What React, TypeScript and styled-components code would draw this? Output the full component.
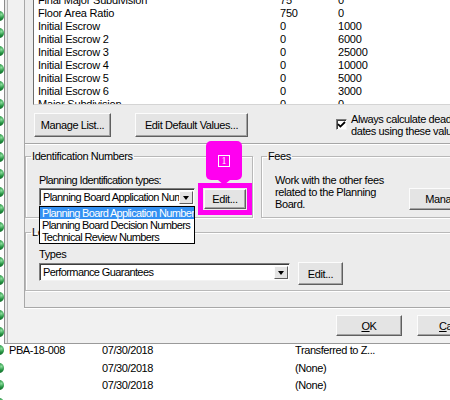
import React from 'react';
import styled, { createGlobalStyle } from 'styled-components';

const GlobalStyle = createGlobalStyle`
    html, body {
        margin: 0;
        padding: 0;
        background: #fff;
    }
    body {
        font-family: "Liberation Sans", Arial, sans-serif;
        font-size: 11px;
        letter-spacing: -0.4px;
        color: #000;
    }
`;

const records = [
    ...Array.from({ length: 19 }, () => ({ id: '', date: '', status: '' })),
    { id: 'PBA-18-008', date: '07/30/2018', status: 'Transferred to Z...' },
    { id: '', date: '07/30/2018', status: '(None)' },
    { id: '', date: '07/30/2018', status: '(None)' },
    { id: '', date: '', status: '' },
];

const reviewFields = [
    ['Final Major Subdivision', '75', '0'],
    ['Floor Area Ratio', '750', '0'],
    ['Initial Escrow', '0', '1000'],
    ['Initial Escrow 2', '0', '6000'],
    ['Initial Escrow 3', '0', '25000'],
    ['Initial Escrow 4', '0', '10000'],
    ['Initial Escrow 5', '0', '5000'],
    ['Initial Escrow 6', '0', '3000'],
    ['Major Subdivision', '0', '0'],
];

const idTypes = [
    'Planning Board Application Numbers',
    'Planning Board Decision Numbers',
    'Technical Review Numbers',
];

const App: React.FC = () => {
    return (
        <Screen>
            <GlobalStyle />
            <RecordList>
                {records.map((r, i) => (
                    <RecordRow key={i}>
                        <StatusDot />
                        <RecordCell $w={93}>{r.id}</RecordCell>
                        <RecordCell $w={193}>{r.date}</RecordCell>
                        <RecordCell $w={150}>{r.status}</RecordCell>
                    </RecordRow>
                ))}
            </RecordList>

            <Dialog>
                <DialogFrame>
                    <Panel>
                        <ListBox>
                            <ListScroll>
                                {reviewFields.map(([name, a, b]) => (
                                    <ListRow key={name}>
                                        <span>{name}</span>
                                        <span>{a}</span>
                                        <span>{b}</span>
                                    </ListRow>
                                ))}
                            </ListScroll>
                        </ListBox>

                        <ButtonsRow>
                            <Button $w={77} $h={24}>Manage List...</Button>
                            <Button $w={113} $h={24}>Edit Default Values...</Button>
                            <CheckOption>
                                <CheckBox>
                                    <svg width="9" height="9" viewBox="0 0 9 9">
                                        <path d="M1 4.2 L3.4 6.6 L8 2" fill="none" stroke="#000" strokeWidth="1.8" />
                                    </svg>
                                </CheckBox>
                                <CheckText>
                                    Always calculate deadline
                                    <br />
                                    dates using these values
                                </CheckText>
                            </CheckOption>
                        </ButtonsRow>

                        <Separator />

                        <GroupsRow>
                            <GroupBox $w={228}>
                                <GroupTitle>Identification Numbers</GroupTitle>
                                <FieldLabel $tight>Planning Identification types:</FieldLabel>
                                <FieldRow>
                                    <Combo $w={156}>
                                        <ComboText>Planning Board Application Numbers</ComboText>
                                        <ComboArrow />
                                        <DropList>
                                            {idTypes.map((t, i) => (
                                                <DropItem key={t} $active={i === 0}>
                                                    {t}
                                                </DropItem>
                                            ))}
                                        </DropList>
                                    </Combo>
                                    <Highlight>
                                        <Callout>
                                            <CalloutBadge>1</CalloutBadge>
                                        </Callout>
                                        <Button $w={42} $h={20}>Edit...</Button>
                                    </Highlight>
                                </FieldRow>
                            </GroupBox>

                            <GroupBox>
                                <GroupTitle>Fees</GroupTitle>
                                <FeesRow>
                                    <FeesText>
                                        Work with the other fees
                                        <br />
                                        related to the Planning
                                        <br />
                                        Board.
                                    </FeesText>
                                    <Button $w={78} $h={22} $top={14}>Manage...</Button>
                                </FeesRow>
                            </GroupBox>
                        </GroupsRow>

                        <LookupBox>
                            <GroupTitle>Lookup Lists</GroupTitle>
                            <FieldLabel $top={9}>Types</FieldLabel>
                            <FieldRow $top={2}>
                                <Combo $w={251}>
                                    <ComboText>Performance Guarantees</ComboText>
                                    <ComboArrow />
                                </Combo>
                                <Button $w={45} $h={23} $top={-1} $left={8}>Edit...</Button>
                            </FieldRow>
                        </LookupBox>
                    </Panel>

                    <ButtonBar>
                        <Button $w={66} $h={21}>
                            <u>O</u>K
                        </Button>
                        <Button $w={76} $h={21}>
                            <u>C</u>ancel
                        </Button>
                    </ButtonBar>
                </DialogFrame>
            </Dialog>
        </Screen>
    );
};

const Screen = styled.div`
    position: relative;
    width: 450px;
    height: 400px;
    overflow: hidden;
    background: #fff;
`;

const RecordList = styled.div`
    padding-top: 7px;
`;

const RecordRow = styled.div`
    display: flex;
    align-items: center;
    height: 17.6px;
    white-space: nowrap;
`;

const StatusDot = styled.span`
    flex: none;
    width: 9px;
    height: 10px;
    margin-left: -5px;
    margin-right: 5px;
    border-radius: 50%;
    background: radial-gradient(circle at 70% 35%, #8fe0a0 0, #23913f 40%, #0b4a20 100%);
`;

const RecordCell = styled.span<{ $w: number }>`
    flex: none;
    width: ${(p) => p.$w}px;
    overflow: hidden;
`;

const Dialog = styled.div`
    position: absolute;
    top: 0;
    left: 4px;
    width: 492px;
    height: 344px;
    box-sizing: border-box;
    display: flex;
    padding-left: 2px;
    background: #e9e9e9;
    border-left: 1px solid #8c8c8c;
    border-bottom: 1px solid #9a9a9a;
`;

const DialogFrame = styled.div`
    flex: 1;
    display: flex;
    flex-direction: column;
    background: #f1f1f1;
    border-left: 1px solid #b4b4b4;
`;

const Panel = styled.div`
    height: 308px;
    margin-left: 16px;
    box-sizing: border-box;
    display: flex;
    flex-direction: column;
    background: #ececec;
    border-left: 1px solid #a8a8a8;
    border-bottom: 1px solid #a8a8a8;
    box-shadow: 0 1px 0 #fff;
`;

const ListBox = styled.div`
    flex: none;
    height: 105px;
    margin-left: 8px;
    box-sizing: border-box;
    overflow: hidden;
    background: #fff;
    border-left: 1px solid #6e6e6e;
    border-bottom: 1px solid #d4d4d4;
`;

const ListScroll = styled.div`
    margin-top: -6px;
`;

const ListRow = styled.div`
    display: grid;
    grid-template-columns: 242px 58px 1fr;
    height: 13px;
    line-height: 13px;
    padding-left: 4px;
    letter-spacing: -0.2px;
    white-space: nowrap;
`;

const ButtonsRow = styled.div`
    display: flex;
    align-items: flex-start;
    gap: 24px;
    margin: 8px 0 0 9px;
`;

const Button = styled.button<{ $w: number; $h: number; $top?: number; $left?: number }>`
    flex: none;
    width: ${(p) => p.$w}px;
    height: ${(p) => p.$h}px;
    margin-top: ${(p) => p.$top ?? 0}px;
    margin-left: ${(p) => p.$left ?? 0}px;
    padding: 0;
    box-sizing: border-box;
    font: inherit;
    letter-spacing: inherit;
    color: #000;
    white-space: nowrap;
    background: #e4e4e4;
    border: 1px solid;
    border-color: #fcfcfc #5f5f5f #5f5f5f #fcfcfc;
    box-shadow: inset -1px -1px 0 #a3a3a3;

    u {
        text-decoration: underline;
    }
`;

const CheckOption = styled.div`
    display: flex;
    align-items: flex-start;
    gap: 4px;
    margin-left: 64px;
    white-space: nowrap;
`;

const CheckBox = styled.span`
    flex: none;
    display: flex;
    align-items: center;
    justify-content: center;
    width: 11px;
    height: 11px;
    margin-top: 6px;
    box-sizing: border-box;
    background: #fff;
    border: 1px solid;
    border-color: #7a7a7a #f4f4f4 #f4f4f4 #7a7a7a;
    box-shadow: inset 1px 1px 0 #404040;
`;

const CheckText = styled.div`
    line-height: 12px;
`;

const Separator = styled.div`
    flex: none;
    height: 1px;
    margin-top: 6px;
    background: #a6a6a6;
    border-bottom: 1px solid #fff;
`;

const GroupsRow = styled.div`
    display: flex;
    gap: 8px;
    margin-top: 5px;
`;

const GroupBox = styled.fieldset<{ $w?: number }>`
    ${(p) => (p.$w ? `width: ${p.$w}px; flex: none;` : 'flex: 1;')}
    height: 68px;
    margin: 0;
    padding: 11px 0 0 13px;
    box-sizing: border-box;
    min-width: 0;
    border: 1px solid #b8b8b8;
    box-shadow: inset 1px 1px 0 #fff, 1px 1px 0 #fff;
`;

const LookupBox = styled(GroupBox)`
    flex: none;
    height: 65px;
    margin-top: 8px;
    padding-top: 0;
`;

const GroupTitle = styled.legend`
    padding: 0 1px;
    margin-left: -8px;
    line-height: 13px;
    white-space: nowrap;
`;

const FieldLabel = styled.div<{ $top?: number; $tight?: boolean }>`
    margin-top: ${(p) => p.$top ?? 0}px;
    line-height: 13px;
    white-space: nowrap;
    ${(p) => p.$tight && 'letter-spacing: -0.6px;'}
`;

const FieldRow = styled.div<{ $top?: number }>`
    display: flex;
    align-items: flex-start;
    margin-top: ${(p) => p.$top ?? 1}px;
`;

const Combo = styled.div<{ $w: number }>`
    position: relative;
    flex: none;
    display: flex;
    align-items: center;
    width: ${(p) => p.$w}px;
    height: 18px;
    box-sizing: border-box;
    background: #fff;
    border: 1px solid;
    border-color: #7e7e7e #f2f2f2 #f2f2f2 #7e7e7e;
    box-shadow: inset 1px 1px 0 #3c3c3c;
`;

const ComboText = styled.span`
    flex: 1;
    overflow: hidden;
    padding-left: 3px;
    white-space: nowrap;
    line-height: 14px;
    letter-spacing: -0.6px;
`;

const ComboArrow = styled.span`
    flex: none;
    position: relative;
    width: 14px;
    height: 13px;
    margin-right: 1px;
    box-sizing: border-box;
    background: #e4e4e4;
    border: 1px solid;
    border-color: #fcfcfc #5f5f5f #5f5f5f #fcfcfc;

    &::after {
        content: '';
        position: absolute;
        left: 3px;
        top: 4px;
        border-left: 3.5px solid transparent;
        border-right: 3.5px solid transparent;
        border-top: 4px solid #000;
    }
`;

const DropList = styled.div`
    position: absolute;
    top: calc(100% + 1px);
    left: -1px;
    width: 156px;
    box-sizing: border-box;
    overflow: hidden;
    background: #fff;
    border: 1px solid #000;
    z-index: 2;
`;

const DropItem = styled.div<{ $active?: boolean }>`
    height: 12px;
    line-height: 12px;
    padding-left: 2px;
    white-space: nowrap;
    letter-spacing: -0.65px;
    color: ${(p) => (p.$active ? '#fff' : '#000')};
    background: ${(p) => (p.$active ? '#3390f2' : 'transparent')};
`;

const Highlight = styled.div`
    position: relative;
    flex: none;
    margin: -5px 0 0 3px;
    padding: 1px;
    border: 5px solid #ff00f0;
`;

const Callout = styled.div`
    position: absolute;
    left: 3px;
    top: -47px;
    width: 36px;
    height: 39px;
    display: flex;
    align-items: center;
    justify-content: center;
    border-radius: 5px;
    background: #ff00f0;

    &::after {
        content: '';
        position: absolute;
        left: 12px;
        bottom: -5px;
        border-left: 6px solid transparent;
        border-right: 6px solid transparent;
        border-top: 5px solid #ff00f0;
    }
`;

const CalloutBadge = styled.span`
    display: flex;
    align-items: center;
    justify-content: center;
    width: 12px;
    height: 12px;
    box-sizing: border-box;
    border: 1px solid #fff;
    color: #fff;
    font-family: "Liberation Serif", serif;
    font-size: 10px;
    letter-spacing: 0;
    line-height: 1;
`;

const FeesRow = styled.div`
    display: flex;
    align-items: flex-start;
`;

const FeesText = styled.div`
    flex: none;
    width: 134px;
    line-height: 12px;
    white-space: nowrap;
`;

const ButtonBar = styled.div`
    display: flex;
    justify-content: flex-end;
    gap: 15px;
    padding: 7px 3px 0 0;
`;

export default App;
